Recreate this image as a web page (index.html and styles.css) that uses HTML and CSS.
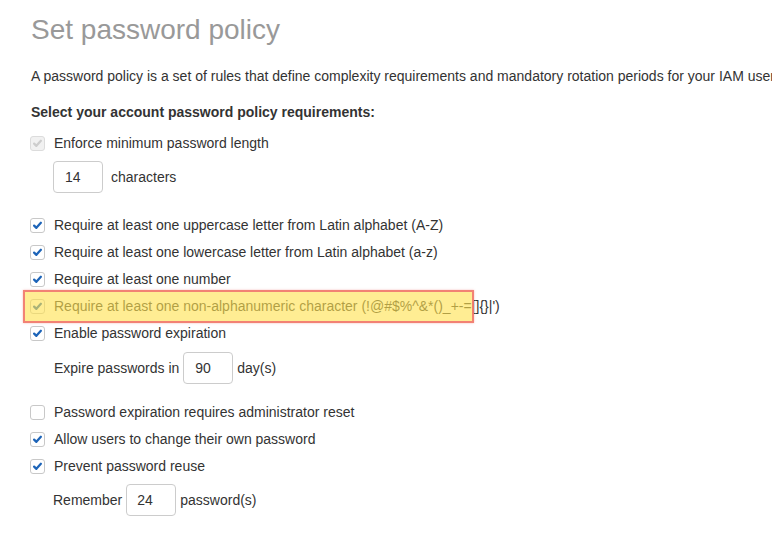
FILE: index.html
```html
<!DOCTYPE html>
<html>
<head>
<meta charset="utf-8">
<link rel="stylesheet" href="styles.css">
</head>
<body>
<div class="page">
  <h1 class="title">Set password policy</h1>
  <p class="intro">A password policy is a set of rules that define complexity requirements and mandatory rotation periods for your IAM users.</p>
  <p class="heading">Select your account password policy requirements:</p>

  <div class="opt first"><span class="cb disabled"><svg viewBox="0 0 15 15"><path d="M3.6 7.6 L6.2 10.2 L11.4 4.4" /></svg></span><span>Enforce minimum password length</span></div>
  <div class="sub chars"><input class="num" type="text" value="14"><span class="after wide">characters</span></div>

  <div class="opt group"><span class="cb"><svg viewBox="0 0 15 15"><path d="M3.6 7.6 L6.2 10.2 L11.4 4.4" /></svg></span><span>Require at least one uppercase letter from Latin alphabet (A-Z)</span></div>
  <div class="opt"><span class="cb"><svg viewBox="0 0 15 15"><path d="M3.6 7.6 L6.2 10.2 L11.4 4.4" /></svg></span><span>Require at least one lowercase letter from Latin alphabet (a-z)</span></div>
  <div class="opt"><span class="cb"><svg viewBox="0 0 15 15"><path d="M3.6 7.6 L6.2 10.2 L11.4 4.4" /></svg></span><span>Require at least one number</span></div>
  <div class="opt highlighted"><span class="cb"><svg viewBox="0 0 15 15"><path d="M3.6 7.6 L6.2 10.2 L11.4 4.4" /></svg></span><span>Require at least one non-alphanumeric character (!@#$%^&amp;*()_+-=[]{}|')</span><span class="mark"></span></div>
  <div class="opt"><span class="cb"><svg viewBox="0 0 15 15"><path d="M3.6 7.6 L6.2 10.2 L11.4 4.4" /></svg></span><span>Enable password expiration</span></div>
  <div class="sub expire"><span class="before">Expire passwords in</span><input class="num" type="text" value="90"><span class="after">day(s)</span></div>

  <div class="opt group2"><span class="cb off"></span><span>Password expiration requires administrator reset</span></div>
  <div class="opt"><span class="cb"><svg viewBox="0 0 15 15"><path d="M3.6 7.6 L6.2 10.2 L11.4 4.4" /></svg></span><span>Allow users to change their own password</span></div>
  <div class="opt"><span class="cb"><svg viewBox="0 0 15 15"><path d="M3.6 7.6 L6.2 10.2 L11.4 4.4" /></svg></span><span>Prevent password reuse</span></div>
  <div class="sub remember"><span class="before">Remember</span><input class="num narrow" type="text" value="24"><span class="after">password(s)</span></div>
</div>
</body>
</html>
```
FILE: styles.css
```css
html, body {
  margin: 0;
  padding: 0;
  background: #ffffff;
  overflow: hidden;
}
body {
  font-family: "Liberation Sans", Arial, sans-serif;
  font-size: 14px;
  color: #333333;
}
.page {
  padding: 14px 0 0 30px;
  white-space: nowrap;
}
.title {
  margin: 0 0 0 1px;
  font-size: 28px;
  font-weight: normal;
  line-height: 32px;
  color: #999999;
}
.intro {
  margin: 20px 0 0 1px;
  line-height: 20px;
}
.heading {
  margin: 16px 0 0 1px;
  line-height: 20px;
  font-weight: bold;
}
.opt {
  position: relative;
  display: flex;
  align-items: center;
  height: 27px;
  line-height: 27px;
}
.opt.first { margin-top: 8px; }
.opt.group { margin-top: 19px; }
.opt.group2 { margin-top: 15px; }
.cb {
  box-sizing: border-box;
  width: 15px;
  height: 15px;
  margin-right: 9px;
  border: 1px solid #c8c8c8;
  border-radius: 3px;
  background: #ffffff;
  display: flex;
  align-items: center;
  justify-content: center;
  flex: none;
}
.cb svg {
  width: 15px;
  height: 15px;
  fill: none;
  stroke: #1d64b8;
  stroke-width: 2.6;
  stroke-linecap: round;
  stroke-linejoin: round;
}
.cb.disabled {
  background: #f1f1f1;
  border-color: #dcdcdc;
}
.cb.disabled svg {
  stroke: #cdcdcd;
}
.highlighted .mark {
  position: absolute;
  left: -7px;
  top: -3px;
  width: 451px;
  height: 33px;
  box-sizing: border-box;
  border: 2px solid rgba(240, 110, 110, 0.85);
  background: rgba(255, 226, 80, 0.62);
  box-shadow: 0 0 2px rgba(240, 120, 120, 0.5);
}
.sub {
  display: flex;
  align-items: center;
  height: 32px;
  line-height: 32px;
}
.sub.chars { margin-top: 4px; padding-left: 23px; }
.sub.expire { margin-top: 5px; padding-left: 24px; }
.sub.remember { margin-top: 4px; padding-left: 23px; }
.num {
  box-sizing: border-box;
  width: 50px;
  height: 32px;
  margin: 0;
  padding: 0 11px;
  border: 1px solid #cccccc;
  border-radius: 4px;
  font-family: "Liberation Sans", Arial, sans-serif;
  font-size: 14px;
  color: #333333;
  background: #ffffff;
  outline: none;
}
.num.narrow { padding: 0 10px; }
.before { margin-right: 4px; }
.after { margin-left: 4px; }
.after.wide { margin-left: 8px; }
```
